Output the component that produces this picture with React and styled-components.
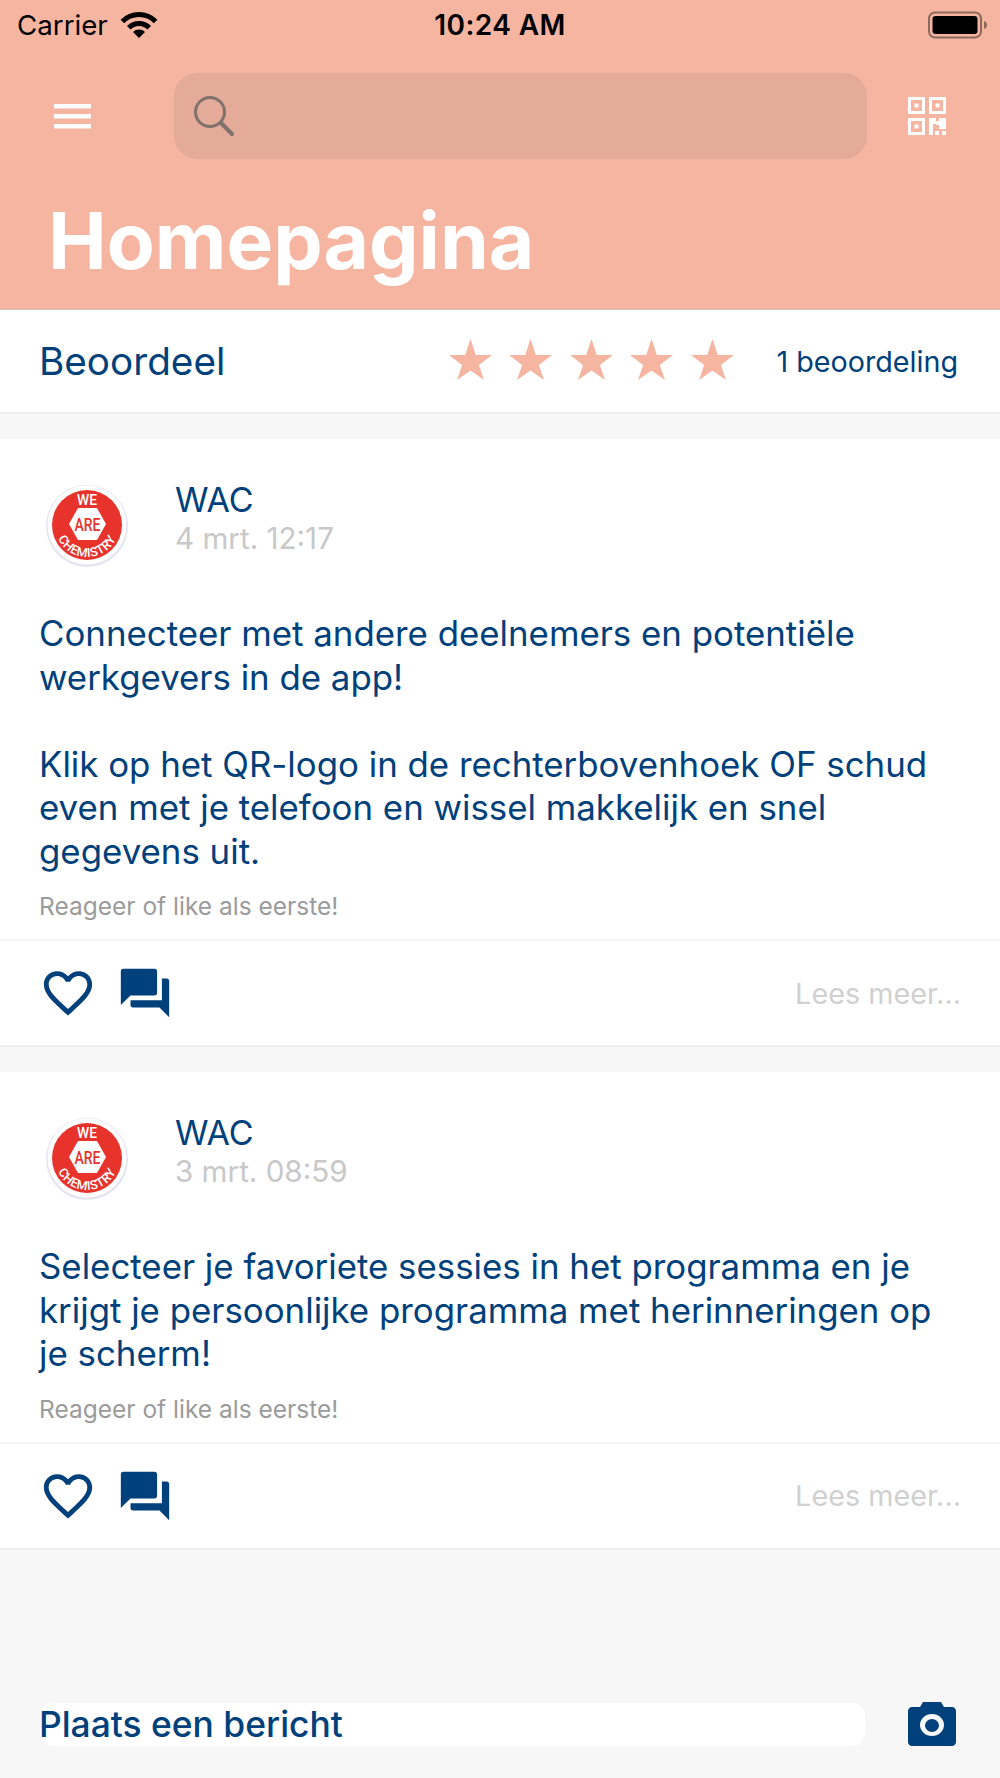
import React from 'react';
import styled, { createGlobalStyle } from 'styled-components';

const NAVY = '#00407b';
const PEACH = '#f5b5a0';

const GlobalStyle = createGlobalStyle`
  html, body {
    margin: 0;
    padding: 0;
    background: #f7f7f7;
    font-family: Inter, "Liberation Sans", sans-serif;
  }
  * { box-sizing: border-box; }
`;

const Page = styled.div`
  width: 1000px;
  height: 1778px;
  display: flex;
  flex-direction: column;
  overflow: hidden;
`;

const Header = styled.header`
  height: 310px;
  flex-shrink: 0;
  background: ${PEACH};
  border-bottom: 1px solid #c4c0bc;
  display: flex;
  flex-direction: column;
`;

const StatusBar = styled.div`
  height: 50px;
  padding: 0 17px;
  display: grid;
  grid-template-columns: 1fr auto 1fr;
  align-items: center;
  color: #000;
`;

const StatusLeft = styled.div`
  display: flex;
  align-items: center;
  gap: 12px;
  font-size: 27.7px;
`;

const Clock = styled.div`
  font-size: 28px;
  font-weight: 600;
  letter-spacing: 0.4px;
`;

const StatusRight = styled.div`
  display: flex;
  justify-content: flex-end;
  margin-right: -5px;
`;

const Toolbar = styled.div`
  margin-top: 23px;
  height: 86px;
  display: grid;
  grid-template-columns: 174px 693px 1fr;
  align-items: center;
`;

const MenuButton = styled.div`
  padding-left: 54px;
  display: flex;
`;

const SearchBox = styled.div`
  height: 86px;
  border-radius: 23px;
  background: #e4ab99;
  padding-left: 19px;
  display: flex;
  align-items: center;
`;

const QrButton = styled.div`
  padding-left: 41px;
  display: flex;
`;

const Title = styled.h1`
  margin: 34px 0 0 48px;
  font-size: 78.5px;
  line-height: 96px;
  font-weight: 700;
  color: #fff;
`;

const RatingRow = styled.section`
  height: 104px;
  flex-shrink: 0;
  background: #fff;
  border-bottom: 2px solid #efefef;
  padding: 0 42px 0 39px;
  display: flex;
  align-items: center;
`;

const RatingLabel = styled.div`
  flex: 1;
  font-size: 38.7px;
  color: ${NAVY};
`;

const Stars = styled.div`
  display: flex;
  gap: 17.4px;
  margin-right: 43px;
  margin-top: -3px;
`;

const RatingCount = styled.div`
  font-size: 28.7px;
  color: ${NAVY};
`;

const Card = styled.article`
  margin-top: 25px;
  flex-shrink: 0;
  background: #fff;
  border-bottom: 2px solid #efefef;
`;

const Author = styled.div`
  height: 173px;
  padding: 39px 0 0 40px;
  display: flex;
`;

const Avatar = styled.div`
  width: 94px;
  height: 94px;
  flex-shrink: 0;
  margin-right: 41px;
`;

const AuthorText = styled.div`
  padding-top: 1px;
`;

const AuthorName = styled.div`
  font-size: 34px;
  line-height: 42px;
  color: ${NAVY};
`;

const PostDate = styled.div`
  font-size: 29.6px;
  line-height: 34px;
  color: #c8c8c8;
`;

const Body = styled.p`
  margin: 0;
  padding: 0 39px;
  font-size: 34.85px;
  line-height: 43.5px;
  color: ${NAVY};
  white-space: pre-line;
`;

const Hint = styled.div`
  margin-top: 18px;
  padding-left: 39px;
  height: 48px;
  font-size: 24.5px;
  line-height: 30px;
  color: #9b9b9b;
`;

const Actions = styled.div`
  height: 106px;
  border-top: 2px solid #f5f5f5;
  padding: 0 39px;
  display: flex;
  align-items: center;
`;

const ActionIcon = styled.div`
  display: flex;
  margin-right: ${(p) => p.$gap}px;
`;

const ReadMore = styled.div`
  margin-left: auto;
  font-size: 28.8px;
  color: #d0d0d0;
`;

const Composer = styled.div`
  margin-top: auto;
  margin-bottom: 32px;
  padding: 0 44px 0 40px;
  display: flex;
  align-items: center;
  justify-content: space-between;
`;

const ComposerInput = styled.div`
  width: 825px;
  height: 43px;
  border-radius: 13px;
  background: #fff;
  font-size: 35.4px;
  font-weight: 500;
  line-height: 43px;
  color: ${NAVY};
  text-indent: -1px;
`;

const Wifi = () => (
  <svg width="38" height="28" viewBox="0 0 38 28">
    <path d="M19 27L13 21A8.5 8.5 0 0 1 25 21z" fill="#000" />
    <path d="M8.75 16.75A14.5 14.5 0 0 1 29.25 16.75" fill="none" stroke="#000" strokeWidth="5" />
    <path d="M2.4 10.4A23.5 23.5 0 0 1 35.6 10.4" fill="none" stroke="#000" strokeWidth="5" />
  </svg>
);

const Battery = () => (
  <svg width="60" height="28" viewBox="0 0 60 28">
    <rect x="1" y="1.5" width="52" height="25" rx="6" fill="none" stroke="#8d6a5e" strokeWidth="2" />
    <rect x="4.5" y="5" width="45" height="18" rx="3" fill="#000" />
    <path d="M56 10c2 .6 3 2 3 4s-1 3.4-3 4z" fill="#8d6a5e" />
  </svg>
);

const MenuIcon = () => (
  <svg width="37" height="25" viewBox="0 0 37 25" fill="#fff">
    <rect y="0" width="37" height="4.5" />
    <rect y="10" width="37" height="4.5" />
    <rect y="20" width="37" height="4.5" />
  </svg>
);

const SearchIcon = () => (
  <svg width="42" height="42" viewBox="0 0 42 42" fill="none" stroke="#7f716c" strokeLinecap="round">
    <circle cx="17" cy="17" r="14.5" strokeWidth="3" />
    <path d="M28 28l11 11" strokeWidth="4" />
  </svg>
);

const QrIcon = () => (
  <svg width="38" height="38" viewBox="0 0 38 38">
    <path
      fillRule="evenodd"
      fill="#fff"
      d="M0 0h17v17H0zM3 3v11h11V3zM6.5 6.5h4v4h-4zM21 0h17v17H21zM24 3v11h11V3zM27.5 6.5h4v4h-4zM0 21h17v17H0zM3 24v11h11V24zM6.5 27.5h4v4h-4zM21 21h7v3h3v-3h7v11h-7v-4h-3v-1h-3v11h-4zM27 34h4v4h-4zM34 34h4v4h-4z"
    />
  </svg>
);

const Star = () => (
  <svg width="43" height="41" viewBox="0 0 43 41">
    <path d="M21.5 0l5.3 16h16.2l-13.1 10.1L35 41 21.5 31.5 8 41l5.1-14.900L0 16h16.200z" fill={PEACH} />
  </svg>
);

const Logo = () => (
  <svg width="94" height="94" viewBox="0 0 94 94">
    <defs>
      <path id="logoBottom" d="M15 47a32 32 0 0 0 64 0" />
    </defs>
    <circle cx="47" cy="48" r="41" fill="#e6e4ee" />
    <circle cx="47" cy="47" r="39.5" fill="#fff" />
    <circle cx="47" cy="47" r="35" fill="#e8322c" />
    <path d="M38 30H57L66 46L57 62H38L29 46z" fill="#fff" />
    <text x="47.5" y="53" textAnchor="middle" fontSize="18" fontWeight="500" fill="#e8322c" fontFamily="Roboto, sans-serif" textLength="26" lengthAdjust="spacingAndGlyphs">
      ARE
    </text>
    <text x="47" y="26.5" textAnchor="middle" fontSize="15" fontWeight="500" fill="#fff" fontFamily="Roboto, sans-serif" textLength="20" lengthAdjust="spacingAndGlyphs">
      WE
    </text>
    <text fontSize="12.5" fontWeight="500" fill="#fff" fontFamily="Roboto, sans-serif" textAnchor="middle" letterSpacing="0.4">
      <textPath href="#logoBottom" startOffset="50%">
        CHEMISTRY
      </textPath>
    </text>
  </svg>
);

const HeartIcon = () => (
  <svg width="58" height="58" viewBox="0 0 24 24" fill={NAVY}>
    <path d="M16.5 3c-1.74 0-3.41.81-4.5 2.09C10.91 3.81 9.24 3 7.5 3 4.42 3 2 5.42 2 8.5c0 3.78 3.4 6.86 8.55 11.54L12 21.35l1.45-1.32C18.6 15.36 22 12.28 22 8.5 22 5.42 19.58 3 16.5 3zm-4.4 15.55l-.1.1-.1-.1C7.14 14.24 4 11.39 4 8.5 4 6.5 5.5 5 7.5 5c1.54 0 3.04.99 3.57 2.36h1.87C13.46 5.99 14.96 5 16.5 5c2 0 3.5 1.5 3.5 3.5 0 2.89-3.14 5.74-7.9 10.05z" />
  </svg>
);

const ForumIcon = () => (
  <svg width="58" height="58" viewBox="0 0 24 24" fill={NAVY}>
    <path d="M21 6h-2v9H6v2c0 .55.45 1 1 1h11l4 4V7c0-.55-.45-1-1-1zm-4 6V3c0-.55-.45-1-1-1H3c-.55 0-1 .45-1 1v14l4-4h10c.55 0 1-.45 1-1z" />
  </svg>
);

const CameraIcon = () => (
  <svg width="48" height="44" viewBox="0 0 48 44">
    <path
      fillRule="evenodd"
      fill={NAVY}
      d="M15 0h18l3 5h8c2.2 0 4 1.8 4 4v31c0 2.2-1.8 4-4 4H4c-2.2 0-4-1.8-4-4V9c0-2.2 1.8-4 4-4h8zM24 12a12 11 0 1 0 0 22 12 11 0 1 0 0-22zM24 17a7 6.5 0 1 1 0 13 7 6.5 0 1 1 0-13z"
    />
  </svg>
);

const posts = [
  {
    date: '4 mrt. 12:17',
    text: 'Connecteer met andere deelnemers en potentiële\nwerkgevers in de app!\n\nKlik op het QR-logo in de rechterbovenhoek OF schud\neven met je telefoon en wissel makkelijk en snel\ngegevens uit.',
  },
  {
    date: '3 mrt. 08:59',
    text: 'Selecteer je favoriete sessies in het programma en je\nkrijgt je persoonlijke programma met herinneringen op\nje scherm!',
  },
];

export default function App() {
  return (
    <Page>
      <GlobalStyle />
      <Header>
        <StatusBar>
          <StatusLeft>
            Carrier
            <Wifi />
          </StatusLeft>
          <Clock>10:24 AM</Clock>
          <StatusRight>
            <Battery />
          </StatusRight>
        </StatusBar>
        <Toolbar>
          <MenuButton>
            <MenuIcon />
          </MenuButton>
          <SearchBox>
            <SearchIcon />
          </SearchBox>
          <QrButton>
            <QrIcon />
          </QrButton>
        </Toolbar>
        <Title>Homepagina</Title>
      </Header>

      <RatingRow>
        <RatingLabel>Beoordeel</RatingLabel>
        <Stars>
          {[1, 2, 3, 4, 5].map((n) => (
            <Star key={n} />
          ))}
        </Stars>
        <RatingCount>1 beoordeling</RatingCount>
      </RatingRow>

      {posts.map((post) => (
        <Card key={post.date}>
          <Author>
            <Avatar>
              <Logo />
            </Avatar>
            <AuthorText>
              <AuthorName>WAC</AuthorName>
              <PostDate>{post.date}</PostDate>
            </AuthorText>
          </Author>
          <Body>{post.text}</Body>
          <Hint>Reageer of like als eerste!</Hint>
          <Actions>
            <ActionIcon $gap={19}>
              <HeartIcon />
            </ActionIcon>
            <ActionIcon $gap={0}>
              <ForumIcon />
            </ActionIcon>
            <ReadMore>Lees meer...</ReadMore>
          </Actions>
        </Card>
      ))}

      <Composer>
        <ComposerInput>Plaats een bericht</ComposerInput>
        <CameraIcon />
      </Composer>
    </Page>
  );
}
